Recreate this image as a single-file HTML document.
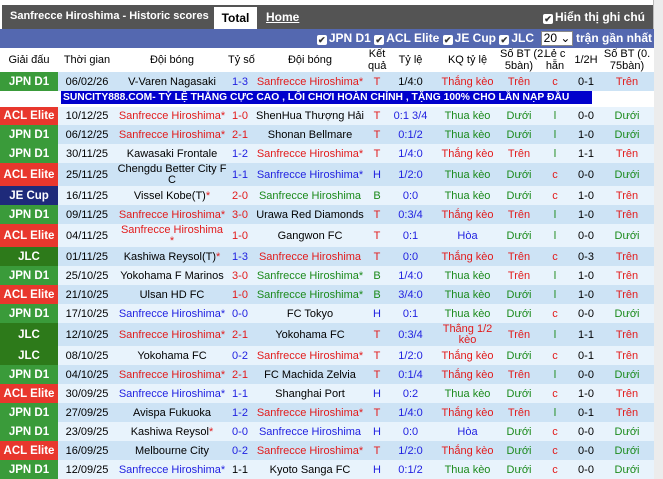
<!DOCTYPE html>
<html><head><meta charset="utf-8"><style>
*{margin:0;padding:0;box-sizing:border-box}
body{width:663px;height:479px;background:#ececec;font-family:"Liberation Sans",Arial,sans-serif;font-size:11px;overflow:hidden;position:relative}
#wrap{position:absolute;left:0;top:0;width:654px;height:479px;background:#fff;border-right:1px solid #bbb}
#top{position:absolute;left:2px;top:5px;width:651px;height:24px;background:#545454;color:#fff;font-weight:bold;font-size:12px}
#top .t{position:absolute;left:8px;top:5px;font-size:11px}
#top .tab{position:absolute;left:212px;top:2px;width:43px;height:22px;background:#fff;color:#000;text-align:center;line-height:22px}
#top .home{position:absolute;left:264px;top:5px;text-decoration:underline}
#top .r{position:absolute;right:8px;top:5px}
.cb{display:inline-block;width:10px;height:10px;background:#fff;border-radius:2px;color:#333;font-size:9px;line-height:10px;text-align:center;vertical-align:-1px;margin-right:2px}
#bar{position:absolute;left:0;top:29px;width:654px;height:19px;background:#5468b0;color:#fff;font-weight:bold;font-size:12px;text-align:right;padding-right:2px;line-height:19px}
.sel{display:inline-block;background:#fff;color:#000;border:1px solid #888;width:32px;height:15px;line-height:13px;text-align:left;padding-left:2px;vertical-align:middle;font-weight:normal}
table{position:absolute;left:0;top:48px;width:654px;border-collapse:collapse;table-layout:fixed}
td{text-align:center;padding:0;line-height:12px;overflow:hidden;white-space:nowrap}
tr.h td{height:24px;color:#000;background:#fff;font-size:11px;overflow:visible}
tr.a td{background:#cde3f5}
tr.b td{background:#e8f3fc}
td.l{color:#fff;font-weight:bold;font-size:11.5px}
.jpn{background:#3a9b3a!important}.acl{background:#e8372d!important}.je{background:#1e2a7a!important}.jlc{background:#2d7a1a!important}
.R{color:#e21b1b}.B{color:#1f1fe0}.G{color:#1b8a1b}.K{color:#000}
tr.ad td{height:13px;background:#fff}
.adt{background:#0000cc;color:#fff;font-weight:bold;font-size:10.3px;display:inline-block;line-height:13px;padding:0 2px;width:531px;overflow:hidden;white-space:nowrap}
.wrap2{line-height:11px}
</style></head><body><div id="wrap">
<div id="top"><span class="t">Sanfrecce Hiroshima - Historic scores</span><span class="tab">Total</span><span class="home">Home</span><span class="r"><span class="cb">✔</span>Hiển thị ghi chú</span></div>
<div id="bar"><span class="cb">✔</span>JPN D1 <span class="cb">✔</span>ACL Elite <span class="cb">✔</span>JE Cup <span class="cb">✔</span>JLC &nbsp;<span class="sel">20 ⌄</span> trận gần nhất</div>
<table>
<colgroup><col style="width:58px"><col style="width:58px"><col style="width:112px"><col style="width:24px"><col style="width:116px"><col style="width:18px"><col style="width:49px"><col style="width:65px"><col style="width:38px"><col style="width:34px"><col style="width:28px"><col style="width:54px"></colgroup>
<tr class="h"><td>Giải đấu</td><td>Thời gian</td><td>Đội bóng</td><td>Tỷ số</td><td>Đội bóng</td><td>Kết<br>quả</td><td>Tỷ lệ</td><td>KQ tỷ lệ</td><td>Số BT (2.<br>5bàn)</td><td>Lẻ c<br>hẵn</td><td>1/2H</td><td>Số BT (0.<br>75bàn)</td></tr>
<tr class="a" style="height:19px"><td class="l jpn">JPN D1</td><td>06/02/26</td><td>V-Varen Nagasaki</td><td class="B">1-3</td><td class="R">Sanfrecce Hiroshima*</td><td class="R">T</td><td>1/4:0</td><td class="R">Thắng kèo</td><td class="R">Trên</td><td class="R">c</td><td>0-1</td><td class="R">Trên</td></tr>
<tr class="ad"><td colspan="12" style="text-align:left;padding-left:61px"><span class="adt">SUNCITY888.COM- TỶ LỆ THẮNG CỰC CAO , LỐI CHƠI HOÀN CHỈNH , TẶNG 100% CHO LẦN NẠP ĐẦU</span></td></tr>
<tr class="b" style="height:18px"><td class="l acl">ACL Elite</td><td>10/12/25</td><td class="R">Sanfrecce Hiroshima*</td><td class="R">1-0</td><td>ShenHua Thượng Hải</td><td class="R">T</td><td class="B">0:1 3/4</td><td class="G">Thua kèo</td><td class="G">Dưới</td><td class="G">l</td><td>0-0</td><td class="G">Dưới</td></tr>
<tr class="a" style="height:19px"><td class="l jpn">JPN D1</td><td>06/12/25</td><td class="R">Sanfrecce Hiroshima*</td><td class="R">2-1</td><td>Shonan Bellmare</td><td class="R">T</td><td class="B">0:1/2</td><td class="G">Thua kèo</td><td class="G">Dưới</td><td class="G">l</td><td>1-0</td><td class="G">Dưới</td></tr>
<tr class="b" style="height:19px"><td class="l jpn">JPN D1</td><td>30/11/25</td><td>Kawasaki Frontale</td><td class="B">1-2</td><td class="R">Sanfrecce Hiroshima*</td><td class="R">T</td><td class="B">1/4:0</td><td class="R">Thắng kèo</td><td class="R">Trên</td><td class="G">l</td><td>1-1</td><td class="R">Trên</td></tr>
<tr class="a" style="height:23px"><td class="l acl">ACL Elite</td><td>25/11/25</td><td class="wrap2">Chengdu Better City F<br>C</td><td class="B">1-1</td><td class="B">Sanfrecce Hiroshima*</td><td class="B">H</td><td class="B">1/2:0</td><td class="G">Thua kèo</td><td class="G">Dưới</td><td class="R">c</td><td>0-0</td><td class="G">Dưới</td></tr>
<tr class="b" style="height:19px"><td class="l je">JE Cup</td><td>16/11/25</td><td>Vissel Kobe(T)<span class="R">*</span></td><td class="R">2-0</td><td class="G">Sanfrecce Hiroshima</td><td class="G">B</td><td class="B">0:0</td><td class="G">Thua kèo</td><td class="G">Dưới</td><td class="R">c</td><td>1-0</td><td class="R">Trên</td></tr>
<tr class="a" style="height:19px"><td class="l jpn">JPN D1</td><td>09/11/25</td><td class="R">Sanfrecce Hiroshima*</td><td class="R">3-0</td><td>Urawa Red Diamonds</td><td class="R">T</td><td class="B">0:3/4</td><td class="R">Thắng kèo</td><td class="R">Trên</td><td class="G">l</td><td>1-0</td><td class="R">Trên</td></tr>
<tr class="b" style="height:23px"><td class="l acl">ACL Elite</td><td>04/11/25</td><td class="R wrap2">Sanfrecce Hiroshima<br>*</td><td class="R">1-0</td><td>Gangwon FC</td><td class="R">T</td><td class="B">0:1</td><td class="B">Hòa</td><td class="G">Dưới</td><td class="G">l</td><td>0-0</td><td class="G">Dưới</td></tr>
<tr class="a" style="height:19px"><td class="l jlc">JLC</td><td>01/11/25</td><td>Kashiwa Reysol(T)<span class="R">*</span></td><td class="B">1-3</td><td class="R">Sanfrecce Hiroshima</td><td class="R">T</td><td class="B">0:0</td><td class="R">Thắng kèo</td><td class="R">Trên</td><td class="R">c</td><td>0-3</td><td class="R">Trên</td></tr>
<tr class="b" style="height:19px"><td class="l jpn">JPN D1</td><td>25/10/25</td><td>Yokohama F Marinos</td><td class="R">3-0</td><td class="G">Sanfrecce Hiroshima*</td><td class="G">B</td><td class="B">1/4:0</td><td class="G">Thua kèo</td><td class="R">Trên</td><td class="G">l</td><td>1-0</td><td class="R">Trên</td></tr>
<tr class="a" style="height:19px"><td class="l acl">ACL Elite</td><td>21/10/25</td><td>Ulsan HD FC</td><td class="R">1-0</td><td class="G">Sanfrecce Hiroshima*</td><td class="G">B</td><td class="B">3/4:0</td><td class="G">Thua kèo</td><td class="G">Dưới</td><td class="G">l</td><td>1-0</td><td class="R">Trên</td></tr>
<tr class="b" style="height:19px"><td class="l jpn">JPN D1</td><td>17/10/25</td><td class="B">Sanfrecce Hiroshima*</td><td class="B">0-0</td><td>FC Tokyo</td><td class="B">H</td><td class="B">0:1</td><td class="G">Thua kèo</td><td class="G">Dưới</td><td class="R">c</td><td>0-0</td><td class="G">Dưới</td></tr>
<tr class="a" style="height:23px"><td class="l jlc">JLC</td><td>12/10/25</td><td class="R">Sanfrecce Hiroshima*</td><td class="R">2-1</td><td>Yokohama FC</td><td class="R">T</td><td class="B">0:3/4</td><td class="R wrap2">Thắng 1/2<br>kèo</td><td class="R">Trên</td><td class="G">l</td><td>1-1</td><td class="R">Trên</td></tr>
<tr class="b" style="height:19px"><td class="l jlc">JLC</td><td>08/10/25</td><td>Yokohama FC</td><td class="B">0-2</td><td class="R">Sanfrecce Hiroshima*</td><td class="R">T</td><td class="B">1/2:0</td><td class="R">Thắng kèo</td><td class="G">Dưới</td><td class="R">c</td><td>0-1</td><td class="R">Trên</td></tr>
<tr class="a" style="height:19px"><td class="l jpn">JPN D1</td><td>04/10/25</td><td class="R">Sanfrecce Hiroshima*</td><td class="R">2-1</td><td>FC Machida Zelvia</td><td class="R">T</td><td class="B">0:1/4</td><td class="R">Thắng kèo</td><td class="R">Trên</td><td class="G">l</td><td>0-0</td><td class="G">Dưới</td></tr>
<tr class="b" style="height:19px"><td class="l acl">ACL Elite</td><td>30/09/25</td><td class="B">Sanfrecce Hiroshima*</td><td class="B">1-1</td><td>Shanghai Port</td><td class="B">H</td><td class="B">0:2</td><td class="G">Thua kèo</td><td class="G">Dưới</td><td class="R">c</td><td>1-0</td><td class="R">Trên</td></tr>
<tr class="a" style="height:19px"><td class="l jpn">JPN D1</td><td>27/09/25</td><td>Avispa Fukuoka</td><td class="B">1-2</td><td class="R">Sanfrecce Hiroshima*</td><td class="R">T</td><td class="B">1/4:0</td><td class="R">Thắng kèo</td><td class="R">Trên</td><td class="G">l</td><td>0-1</td><td class="R">Trên</td></tr>
<tr class="b" style="height:19px"><td class="l jpn">JPN D1</td><td>23/09/25</td><td>Kashiwa Reysol<span class="R">*</span></td><td class="B">0-0</td><td class="B">Sanfrecce Hiroshima</td><td class="B">H</td><td class="B">0:0</td><td class="B">Hòa</td><td class="G">Dưới</td><td class="R">c</td><td>0-0</td><td class="G">Dưới</td></tr>
<tr class="a" style="height:19px"><td class="l acl">ACL Elite</td><td>16/09/25</td><td>Melbourne City</td><td class="B">0-2</td><td class="R">Sanfrecce Hiroshima*</td><td class="R">T</td><td class="B">1/2:0</td><td class="R">Thắng kèo</td><td class="G">Dưới</td><td class="R">c</td><td>0-0</td><td class="G">Dưới</td></tr>
<tr class="b" style="height:19px"><td class="l jpn">JPN D1</td><td>12/09/25</td><td class="B">Sanfrecce Hiroshima*</td><td class="K">1-1</td><td>Kyoto Sanga FC</td><td class="B">H</td><td class="B">0:1/2</td><td class="G">Thua kèo</td><td class="G">Dưới</td><td class="R">c</td><td>0-0</td><td class="G">Dưới</td></tr>
</table>
</div></body></html>
